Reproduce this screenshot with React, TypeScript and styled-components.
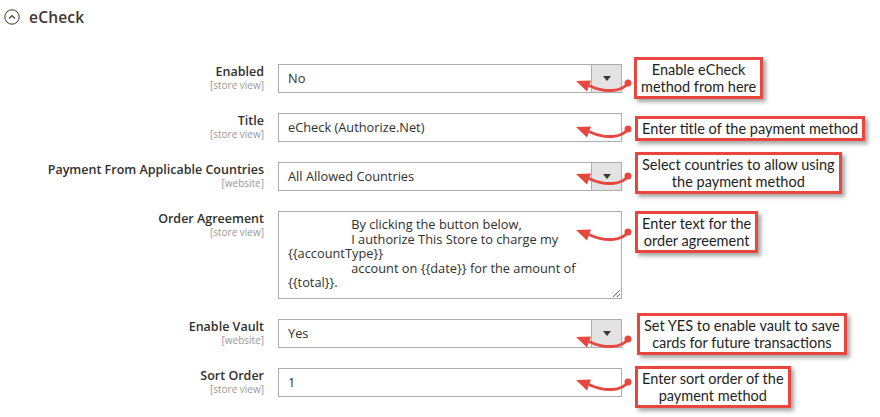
import React from "react";
import styled, { createGlobalStyle } from "styled-components";

const Global = createGlobalStyle`
  html, body { margin: 0; padding: 0; background: #ffffff; }
  body { font-family: "Open Sans", "Noto Sans", sans-serif; color: #303030; }
  * { box-sizing: border-box; }
`;

const Page = styled.div`
  width: 880px;
  height: 417px;
  overflow: hidden;
  padding: 8px 0 0 4px;
`;

const Header = styled.div`
  display: flex;
  align-items: center;
  gap: 9px;
  height: 18px;
`;

const HeaderTitle = styled.span`
  font-size: 15.5px;
  font-weight: 600;
  color: #41362f;
  letter-spacing: 0.2px;
`;

const Form = styled.div`
  display: flex;
  flex-direction: column;
  gap: 20px;
  margin-top: 38px;
  margin-left: -4px;
`;

const Row = styled.div`
  display: grid;
  grid-template-columns: 264px 344px 1fr;
  column-gap: 14px;
  align-items: start;
`;

const LabelCell = styled.div`
  text-align: right;
  display: flex;
  flex-direction: column;
`;

const LabelText = styled.span`
  font-size: 12.5px;
  line-height: 15px;
  font-weight: 600;
  color: #303030;
`;

const Scope = styled.span`
  font-size: 10px;
  line-height: 13px;
  color: #999999;
`;

const FieldBox = styled.div`
  display: flex;
  height: 29px;
  border: 1px solid #adadad;
  background: #ffffff;
`;

const FieldValue = styled.div`
  flex: 1;
  padding: 0 9px;
  font-size: 12.8px;
  line-height: 27px;
  color: #303030;
  white-space: nowrap;
`;

const SelectButton = styled.div`
  width: 30px;
  background: #e3e3e3;
  border-left: 1px solid #adadad;
  display: flex;
  align-items: center;
  justify-content: center;
  &::after {
    content: "";
    border-left: 4px solid transparent;
    border-right: 4px solid transparent;
    border-top: 5px solid #41362f;
  }
`;

const TextArea = styled.textarea`
  display: block;
  width: 344px;
  height: 88px;
  border: 1px solid #adadad;
  border-radius: 0;
  padding: 5px 9px;
  margin: 0;
  font-family: "Open Sans", "Noto Sans", sans-serif;
  font-size: 12.8px;
  line-height: 14.5px;
  color: #303030;
  resize: vertical;
  outline: none;
  overflow: hidden;
  white-space: pre;
`;

const Annotation = styled.div<{ $h: number }>`
  position: relative;
  height: ${(p) => p.$h}px;
  margin-left: -2px;
`;

const Callout = styled.div<{ $top: number; $left: number }>`
  display: inline-block;
  margin-top: ${(p) => p.$top}px;
  margin-left: ${(p) => p.$left}px;
  border: 3px solid #e8463f;
  background: #ffffff;
  box-shadow: 3px 3px 4px rgba(0, 0, 0, 0.35);
  padding: 1px 4px;
  font-family: Lato, "Liberation Sans", sans-serif;
  font-size: 14.5px;
  line-height: 17px;
  color: #1e1e1e;
  text-align: center;
  white-space: nowrap;
`;

const ArrowSvg = styled.svg<{ $dot: number }>`
  position: absolute;
  left: -59px;
  top: ${(p) => p.$dot - 5}px;
  overflow: visible;
`;

const Arrow = ({ dot }: { dot: number }) => (
  <ArrowSvg $dot={dot} width="60" height="20" viewBox="0 0 60 20">
    <path d="M53 5 C 47 14, 30 15, 15 8" fill="none" stroke="#e8463f" strokeWidth="3" strokeLinecap="round" />
    <polygon points="1,3 16,2.5 12,13.5" fill="#e8463f" />
    <circle cx="53" cy="5" r="3.5" fill="#e8463f" />
  </ArrowSvg>
);

const ChevronCircle = () => (
  <svg width="16" height="16" viewBox="0 0 16 16">
    <circle cx="8" cy="8" r="7.2" fill="none" stroke="#41362f" strokeWidth="1" />
    <path d="M5 9.5 L8 6.5 L11 9.5" fill="none" stroke="#41362f" strokeWidth="1.1" />
  </svg>
);

type Ann = { lines: string[]; top: number; left: number; dot: number };

type RowDef = {
  label: string;
  scope: string;
  kind: "select" | "text" | "area";
  value: string;
  ann: Ann;
};

const agreement =
  "                   By clicking the button below,\n" +
  "                   I authorize This Store to charge my\n" +
  "{{accountType}}\n" +
  "                   account on {{date}} for the amount of\n" +
  "{{total}}.";

const rows: RowDef[] = [
  { label: "Enabled", scope: "[store view]", kind: "select", value: "No", ann: { lines: ["Enable eCheck", "method from here"], top: -7, left: 0, dot: 19 } },
  { label: "Title", scope: "[store view]", kind: "text", value: "eCheck (Authorize.Net)", ann: { lines: ["Enter title of the payment method"], top: 3, left: 1, dot: 16 } },
  { label: "Payment From Applicable Countries", scope: "[website]", kind: "select", value: "All Allowed Countries", ann: { lines: ["Select countries to allow using", "the payment method"], top: -10, left: 1, dot: 14 } },
  { label: "Order Agreement", scope: "[store view]", kind: "area", value: agreement, ann: { lines: ["Enter text for the", "order agreement"], top: 0, left: 1, dot: 21 } },
  { label: "Enable Vault", scope: "[website]", kind: "select", value: "Yes", ann: { lines: ["Set YES to enable vault to save", "cards for future transactions"], top: -6, left: 3, dot: 20 } },
  { label: "Sort Order", scope: "[store view]", kind: "text", value: "1", ann: { lines: ["Enter sort order of the", "payment method"], top: -2, left: 1, dot: 14 } },
];

export default function App() {
  return (
    <>
      <Global />
      <Page>
        <Header>
          <ChevronCircle />
          <HeaderTitle>eCheck</HeaderTitle>
        </Header>
        <Form>
          {rows.map((r) => (
            <Row key={r.label}>
              <LabelCell>
                <LabelText>{r.label}</LabelText>
                <Scope>{r.scope}</Scope>
              </LabelCell>
              {r.kind === "area" ? (
                <TextArea readOnly wrap="off" value={r.value} />
              ) : (
                <FieldBox>
                  <FieldValue>{r.value}</FieldValue>
                  {r.kind === "select" && <SelectButton />}
                </FieldBox>
              )}
              <Annotation $h={r.kind === "area" ? 88 : 29}>
                <Arrow dot={r.ann.dot} />
                <Callout $top={r.ann.top} $left={r.ann.left}>
                  {r.ann.lines.map((l) => (
                    <div key={l}>{l}</div>
                  ))}
                </Callout>
              </Annotation>
            </Row>
          ))}
        </Form>
      </Page>
    </>
  );
}
